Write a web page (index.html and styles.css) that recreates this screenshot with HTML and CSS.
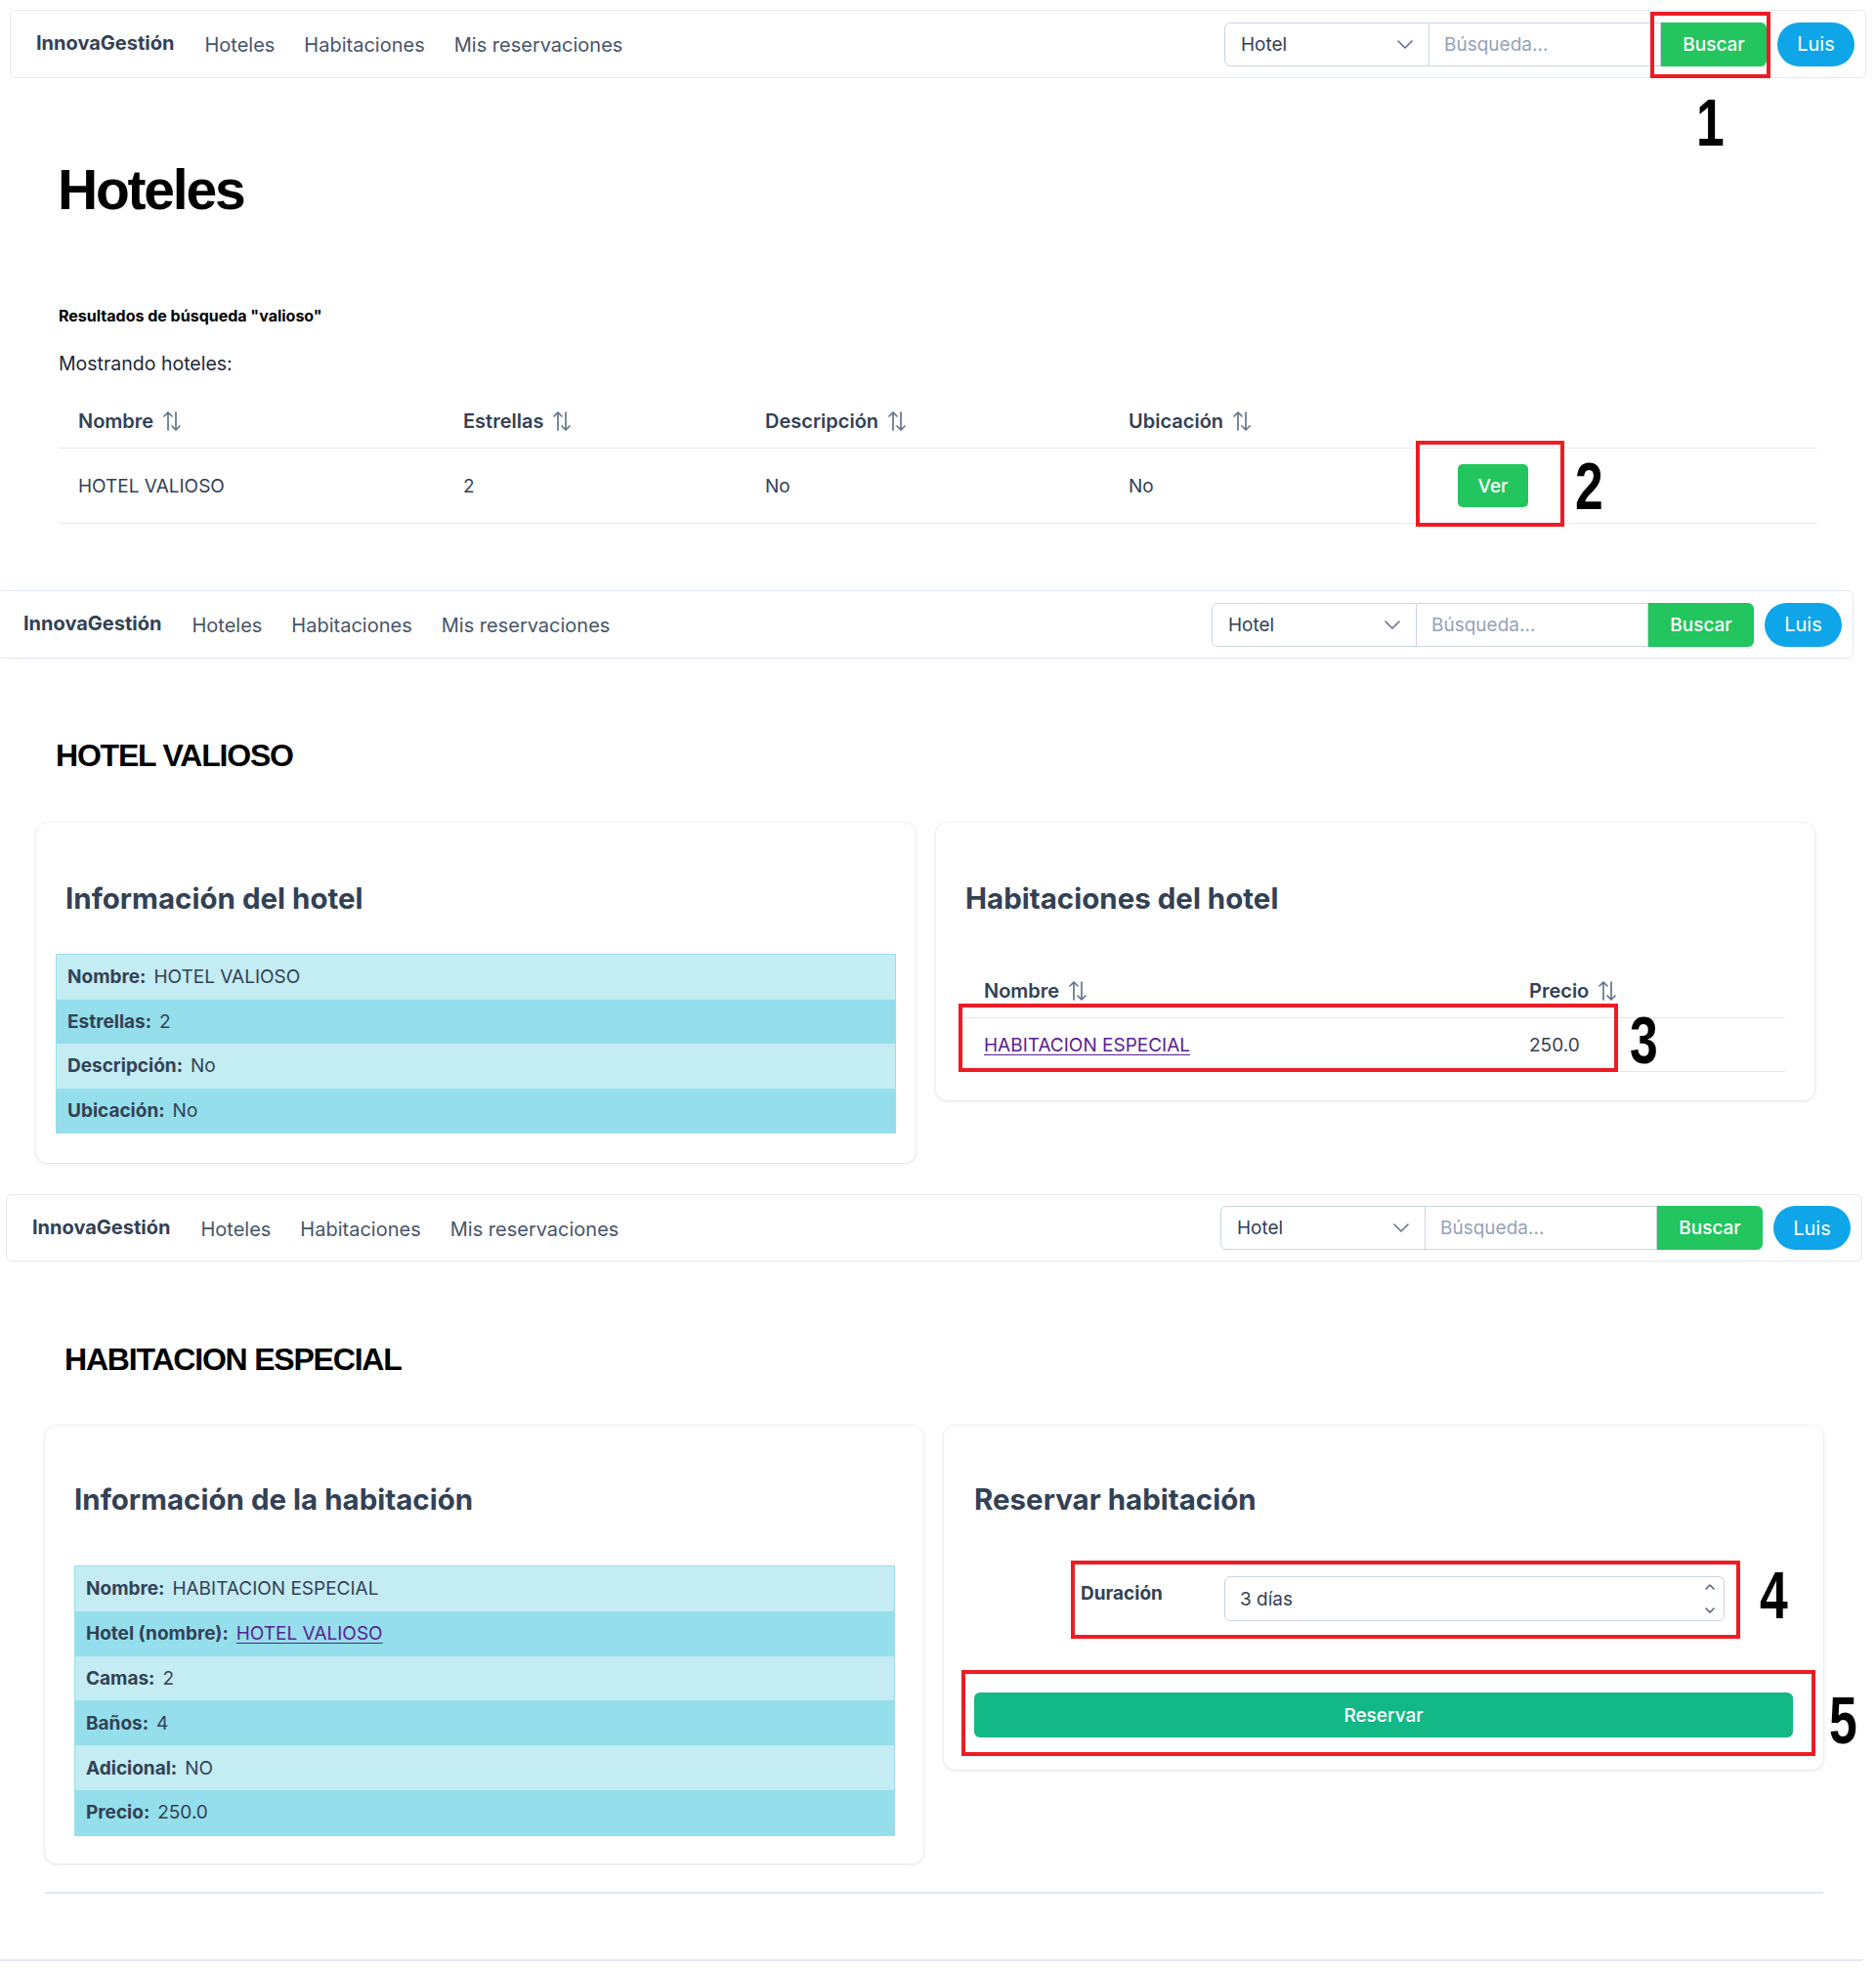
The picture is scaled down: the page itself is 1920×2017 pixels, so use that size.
FILE: index.html
```html
<!DOCTYPE html>
<html lang="es">
<head>
<meta charset="utf-8">
<title>InnovaGestión</title>
<link rel="stylesheet" href="styles.css">
</head>
<body>

<section class="shot shot-1">
  <nav class="navbar nav-1">
    <span class="brand">InnovaGestión</span>
    <a class="nav-link">Hoteles</a>
    <a class="nav-link">Habitaciones</a>
    <a class="nav-link">Mis reservaciones</a>
    <div class="search">
      <div class="search-select">Hotel
        <svg class="chev" width="16" height="9" viewBox="0 0 16 9"><polyline points="1,1 8,8 15,1" fill="none" stroke="#64748b" stroke-width="1.6" stroke-linecap="round" stroke-linejoin="round"/></svg>
      </div>
      <div class="search-input">Búsqueda...</div>
      <button class="btn-buscar">Buscar</button>
    </div>
    <button class="btn-user">Luis</button>
  </nav>

  <main class="hoteles-page">
    <h1 class="page-title">Hoteles</h1>
    <p class="search-note">Resultados de búsqueda "valioso"</p>
    <p class="showing">Mostrando hoteles:</p>
    <div class="results">
      <div class="results-row results-head">
        <div class="cell head-cell">Nombre <svg class="sort" width="20" height="22" viewBox="0 0 20 22"><path d="M6 20V2M2 6l4-4 4 4M14 2v18M10 16l4 4 4-4" fill="none" stroke="#64748b" stroke-width="1.7" stroke-linecap="round" stroke-linejoin="round"/></svg></div>
        <div class="cell head-cell">Estrellas <svg class="sort" width="20" height="22" viewBox="0 0 20 22"><path d="M6 20V2M2 6l4-4 4 4M14 2v18M10 16l4 4 4-4" fill="none" stroke="#64748b" stroke-width="1.7" stroke-linecap="round" stroke-linejoin="round"/></svg></div>
        <div class="cell head-cell">Descripción <svg class="sort" width="20" height="22" viewBox="0 0 20 22"><path d="M6 20V2M2 6l4-4 4 4M14 2v18M10 16l4 4 4-4" fill="none" stroke="#64748b" stroke-width="1.7" stroke-linecap="round" stroke-linejoin="round"/></svg></div>
        <div class="cell head-cell">Ubicación <svg class="sort" width="20" height="22" viewBox="0 0 20 22"><path d="M6 20V2M2 6l4-4 4 4M14 2v18M10 16l4 4 4-4" fill="none" stroke="#64748b" stroke-width="1.7" stroke-linecap="round" stroke-linejoin="round"/></svg></div>
        <div class="cell"></div>
      </div>
      <div class="results-row results-body">
        <div class="cell">HOTEL VALIOSO</div>
        <div class="cell">2</div>
        <div class="cell">No</div>
        <div class="cell">No</div>
        <div class="cell"><button class="btn-ver">Ver</button></div>
      </div>
    </div>
  </main>

  <div class="mark mark-1"></div>
  <span class="digit digit-1">1</span>
  <div class="mark mark-2"></div>
  <span class="digit digit-2">2</span>
</section>

<section class="shot shot-2">
  <nav class="navbar nav-2">
    <span class="brand">InnovaGestión</span>
    <a class="nav-link">Hoteles</a>
    <a class="nav-link">Habitaciones</a>
    <a class="nav-link">Mis reservaciones</a>
    <div class="search">
      <div class="search-select">Hotel
        <svg class="chev" width="16" height="9" viewBox="0 0 16 9"><polyline points="1,1 8,8 15,1" fill="none" stroke="#64748b" stroke-width="1.6" stroke-linecap="round" stroke-linejoin="round"/></svg>
      </div>
      <div class="search-input">Búsqueda...</div>
      <button class="btn-buscar">Buscar</button>
    </div>
    <button class="btn-user">Luis</button>
  </nav>

  <main class="detail-page detail-hotel">
    <h2 class="detail-title">HOTEL VALIOSO</h2>
    <div class="cards cards-hotel">
      <div class="card card-hotel-info">
        <h3 class="card-title">Información del hotel</h3>
        <div class="info-table">
          <div class="info-row"><b>Nombre:</b><span>HOTEL VALIOSO</span></div>
          <div class="info-row"><b>Estrellas:</b><span>2</span></div>
          <div class="info-row"><b>Descripción:</b><span>No</span></div>
          <div class="info-row"><b>Ubicación:</b><span>No</span></div>
        </div>
      </div>
      <div class="card card-rooms">
        <h3 class="card-title">Habitaciones del hotel</h3>
        <div class="rooms">
          <div class="rooms-row rooms-head">
            <div class="cell head-cell">Nombre <svg class="sort" width="20" height="22" viewBox="0 0 20 22"><path d="M6 20V2M2 6l4-4 4 4M14 2v18M10 16l4 4 4-4" fill="none" stroke="#64748b" stroke-width="1.7" stroke-linecap="round" stroke-linejoin="round"/></svg></div>
            <div class="cell head-cell">Precio <svg class="sort" width="20" height="22" viewBox="0 0 20 22"><path d="M6 20V2M2 6l4-4 4 4M14 2v18M10 16l4 4 4-4" fill="none" stroke="#64748b" stroke-width="1.7" stroke-linecap="round" stroke-linejoin="round"/></svg></div>
          </div>
          <div class="rooms-row rooms-body">
            <div class="cell"><a class="link">HABITACION ESPECIAL</a></div>
            <div class="cell">250.0</div>
          </div>
        </div>
      </div>
    </div>
  </main>

  <div class="mark mark-3"></div>
  <span class="digit digit-3">3</span>
</section>

<section class="shot shot-3">
  <nav class="navbar nav-3">
    <span class="brand">InnovaGestión</span>
    <a class="nav-link">Hoteles</a>
    <a class="nav-link">Habitaciones</a>
    <a class="nav-link">Mis reservaciones</a>
    <div class="search">
      <div class="search-select">Hotel
        <svg class="chev" width="16" height="9" viewBox="0 0 16 9"><polyline points="1,1 8,8 15,1" fill="none" stroke="#64748b" stroke-width="1.6" stroke-linecap="round" stroke-linejoin="round"/></svg>
      </div>
      <div class="search-input">Búsqueda...</div>
      <button class="btn-buscar">Buscar</button>
    </div>
    <button class="btn-user">Luis</button>
  </nav>

  <main class="detail-page detail-room">
    <h2 class="detail-title">HABITACION ESPECIAL</h2>
    <div class="cards cards-room">
      <div class="card card-room-info">
        <h3 class="card-title">Información de la habitación</h3>
        <div class="info-table info-room">
          <div class="info-row"><b>Nombre:</b><span>HABITACION ESPECIAL</span></div>
          <div class="info-row"><b>Hotel (nombre):</b><a class="link">HOTEL VALIOSO</a></div>
          <div class="info-row"><b>Camas:</b><span>2</span></div>
          <div class="info-row"><b>Baños:</b><span>4</span></div>
          <div class="info-row"><b>Adicional:</b><span>NO</span></div>
          <div class="info-row"><b>Precio:</b><span>250.0</span></div>
        </div>
      </div>
      <div class="card card-book">
        <h3 class="card-title">Reservar habitación</h3>
        <div class="form-row">
          <label class="form-label">Duración</label>
          <div class="number-input">
            <span>3 días</span>
            <span class="spin">
              <svg width="10" height="6" viewBox="0 0 10 6"><polyline points="1,5 5,1 9,5" fill="none" stroke="#475569" stroke-width="1.4" stroke-linecap="round" stroke-linejoin="round"/></svg>
              <svg width="10" height="6" viewBox="0 0 10 6"><polyline points="1,1 5,5 9,1" fill="none" stroke="#475569" stroke-width="1.4" stroke-linecap="round" stroke-linejoin="round"/></svg>
            </span>
          </div>
        </div>
        <button class="btn-reservar">Reservar</button>
      </div>
    </div>
    <hr class="divider">
    <div class="footer-line"></div>
  </main>

  <div class="mark mark-4"></div>
  <span class="digit digit-4">4</span>
  <div class="mark mark-5"></div>
  <span class="digit digit-5">5</span>
</section>

</body>
</html>
```

FILE: styles.css
```css
* { box-sizing: border-box; }

html, body {
  margin: 0;
  padding: 0;
  overflow: hidden;
  background: #ffffff;
}

body {
  width: 1920px;
  height: 2017px;
  font-family: Inter, "Noto Sans", "Liberation Sans", sans-serif;
  color: #334155;
}

.shot {
  position: relative;
  display: flow-root;
}
.shot-1 { height: 594px; }
.shot-2 { height: 618px; }
.shot-3 { height: 805px; }

/* ---------- navbar ---------- */
.navbar {
  display: flex;
  align-items: center;
  width: 1900px;
  height: 70px;
  margin-top: 10px;
  padding: 0 11px 0 26px;
  border: 1px solid #e2e8f0;
  border-radius: 6px;
  background: #fff;
}
.nav-1 { margin-left: 10px; }
.nav-2 { margin-left: -3px; }
.nav-3 { margin-left: 6px; height: 69px; }

.brand {
  font-size: 20px;
  font-weight: 700;
  color: #334155;
  margin-right: 31px;
  position: relative;
  top: -1px;
}
.nav-link {
  font-size: 20px;
  color: #475569;
  margin-right: 30px;
  text-decoration: none;
  position: relative;
  top: 1px;
}

.search {
  display: flex;
  margin-left: auto;
  height: 45px;
}
.search-select {
  width: 210px;
  display: flex;
  align-items: center;
  justify-content: space-between;
  padding: 0 16px 0 16px;
  border: 1px solid #cbd5e1;
  border-radius: 6px 0 0 6px;
  font-size: 19px;
  color: #334155;
}
.search-input {
  width: 237px;
  display: flex;
  align-items: center;
  padding-left: 15px;
  border: 1px solid #cbd5e1;
  border-left: none;
  font-size: 19px;
  color: #94a3b8;
}
.btn-buscar {
  width: 108px;
  border: none;
  border-radius: 0 6px 6px 0;
  background: #22c55e;
  color: #fff;
  font-family: inherit;
  font-size: 19px;
  font-weight: 500;
}
.btn-user {
  width: 79px;
  height: 45px;
  margin-left: 11px;
  border: none;
  border-radius: 23px;
  background: #0ea5e9;
  color: #fff;
  font-family: inherit;
  font-size: 20px;
}

/* ---------- hoteles list ---------- */
.hoteles-page {
  padding-left: 60px;
}
.page-title {
  margin: 82px 0 0 -1px;
  font-family: "Liberation Sans", Arial, sans-serif;
  font-size: 57px;
  line-height: 64px;
  font-weight: 700;
  letter-spacing: -2.2px;
  color: #000;
}
.search-note {
  margin: 85px 0 0;
  font-size: 16px;
  line-height: 24px;
  font-weight: 700;
  color: #000;
}
.showing {
  margin: 23px 0 0;
  font-size: 19.5px;
  line-height: 28px;
  color: #1e293b;
}
.results {
  width: 1800px;
  margin-top: 18px;
}
.results-row {
  display: grid;
  grid-template-columns: 394px 309px 372px 337px 1fr;
  align-items: center;
  border-bottom: 1px solid #e2e8f0;
}
.results-head { height: 55px; }
.results-body { height: 77px; }

.cell {
  padding-left: 20px;
  font-size: 19px;
  color: #334155;
}
.head-cell {
  display: flex;
  align-items: center;
  gap: 9px;
  font-weight: 600;
  font-size: 20px;
}
.sort { flex: none; }

.btn-ver {
  width: 72px;
  height: 44px;
  border: none;
  border-radius: 5px;
  background: #22c55e;
  color: #fff;
  font-family: inherit;
  font-size: 19px;
  font-weight: 500;
}

/* ---------- detail pages ---------- */
.detail-title {
  margin: 79px 0 0;
  font-family: "Liberation Sans", Arial, sans-serif;
  font-size: 32px;
  line-height: 40px;
  font-weight: 700;
  letter-spacing: -1.2px;
  color: #000;
}
.detail-hotel .detail-title { padding-left: 57px; }
.detail-room .detail-title { padding-left: 66px; margin-top: 80px; }

.cards {
  display: grid;
  gap: 21px;
  align-items: start;
}
.cards-hotel {
  margin-top: 49px;
  padding-left: 37px;
  grid-template-columns: 900px 899px;
}
.cards-room {
  margin-top: 48px;
  padding-left: 46px;
  grid-template-columns: 899px 900px;
}

.card {
  background: #fff;
  border-radius: 12px;
  box-shadow: 0 1px 4px rgba(15, 23, 42, 0.12), 0 0 0 1px rgba(15, 23, 42, 0.025);
}
.card-title {
  margin: 0;
  font-size: 29.5px;
  line-height: 36px;
  font-weight: 700;
  color: #334155;
}

.card-hotel-info { padding: 59px 20px 30px; }
.card-hotel-info .card-title { margin-left: 10px; }
.card-rooms { padding: 59px 30px 29px 23px; }
.card-rooms .card-title { margin-left: 7px; }
.card-room-info { padding: 57px 29px 28px 30px; }
.card-book { padding: 57px 31px 33px 31px; }

.info-table {
  margin-top: 39px;
  border: 1px solid #9fdde9;
}
.info-room { margin-top: 50px; }
.info-row {
  display: flex;
  align-items: center;
  gap: 8px;
  height: 45.5px;
  padding-left: 11px;
  font-size: 19px;
  color: #334155;
  background: #c3ecf3;
}
.info-room .info-row { height: 45.8px; }
.info-row:nth-child(even) { background: #94dfeb; }
.info-row b { font-weight: 700; }

.link {
  color: #5a2192;
  text-decoration: underline;
  text-underline-offset: 3px;
}

.rooms { margin-top: 50px; }
.rooms-row {
  display: grid;
  grid-template-columns: 558px 1fr;
  align-items: center;
  height: 55px;
  border-bottom: 1px solid #e2e8f0;
}
.rooms-row .cell { padding-left: 26px; }

.form-row {
  display: flex;
  align-items: flex-start;
  margin-top: 61px;
  padding-left: 109px;
}
.form-label {
  width: 147px;
  padding-top: 4px;
  font-size: 19px;
  line-height: 28px;
  font-weight: 700;
  color: #334155;
}
.number-input {
  width: 512px;
  height: 46px;
  display: flex;
  align-items: center;
  justify-content: space-between;
  padding: 0 9px 0 15px;
  border: 1px solid #cbd5e1;
  border-radius: 6px;
  font-size: 19px;
  color: #334155;
}
.spin {
  display: flex;
  flex-direction: column;
  justify-content: space-between;
  height: 36px;
  padding: 3px 0;
}
.spin svg { display: block; }

.btn-reservar {
  display: block;
  width: 100%;
  height: 46px;
  margin-top: 73px;
  border: none;
  border-radius: 6px;
  background: #12b886;
  color: #fff;
  font-family: inherit;
  font-size: 19px;
  font-weight: 500;
}

.divider {
  margin: 29px 0 0 46px;
  width: 1820px;
  height: 0;
  border: none;
  border-top: 2px solid #e2e8f0;
}
.footer-line {
  margin-top: 67px;
  width: 1906px;
  border-top: 2px solid #e2e8f0;
}

/* ---------- annotations ---------- */
.mark {
  position: absolute;
  border: 4px solid #ed1c24;
}
.mark-1 { left: 1689px; top: 12px; width: 123px; height: 68px; }
.mark-2 { left: 1449px; top: 451px; width: 152px; height: 88px; }
.mark-3 { left: 981px; top: 433px; width: 675px; height: 70px; }
.mark-4 { left: 1096px; top: 385px; width: 685px; height: 80px; }
.mark-5 { left: 984px; top: 497px; width: 874px; height: 88px; }

.digit {
  position: absolute;
  font-family: "Liberation Sans", Arial, sans-serif;
  font-weight: 700;
  font-size: 68px;
  line-height: 68px;
  color: #000;
  transform: scaleX(0.76);
  transform-origin: left top;
}
.digit-1 { left: 1736px; top: 91px; }
.digit-2 { left: 1612px; top: 463px; }
.digit-3 { left: 1668px; top: 436px; }
.digit-4 { left: 1801px; top: 386px; }
.digit-5 { left: 1872px; top: 514px; }
```
